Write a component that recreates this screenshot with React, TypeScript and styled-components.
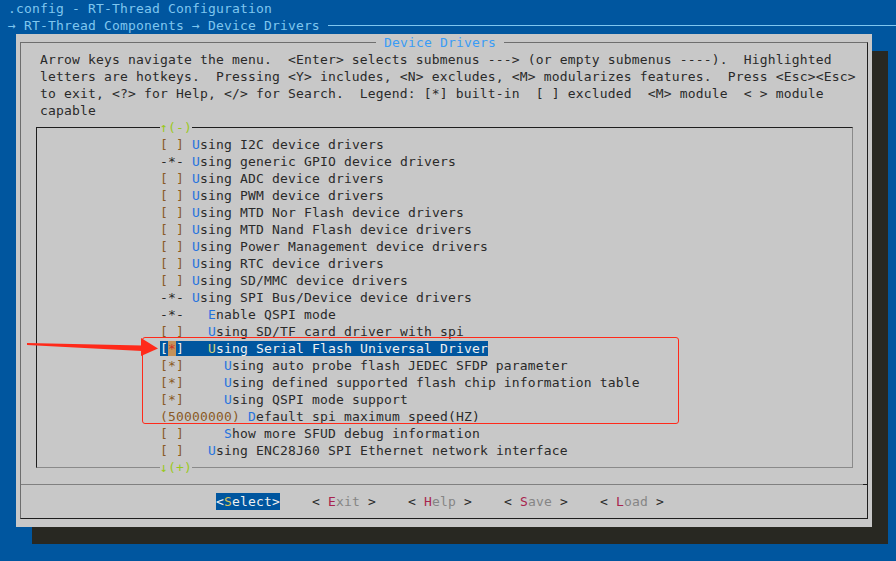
import React from 'react';
import styled, { createGlobalStyle } from 'styled-components';

const BLUE = '#00569f';
const GREY = '#c8c8c8';

const GlobalStyle = createGlobalStyle`
  html, body {
    margin: 0;
    padding: 0;
    background: ${BLUE};
  }
`;

const Screen = styled.div`
  position: relative;
  width: 896px;
  height: 561px;
  overflow: hidden;
  box-sizing: border-box;
  padding-left: 8px;
  background: ${BLUE};
  font-family: "DejaVu Sans Mono", "Liberation Mono", monospace;
  font-size: 13px;
  letter-spacing: 0.17px;
  line-height: 17px;
  white-space: pre;
`;

const TopLine = styled.div`
  height: 17px;
  color: #7fc6ef;
`;

const Crumb = styled.div`
  display: flex;
  align-items: center;
  height: 17px;
  color: #7fc6ef;

  &::after {
    content: '';
    flex: 1;
    height: 1px;
    margin-left: 8px;
    background: #7fc6ef;
  }
`;

const Dialog = styled.div`
  display: flex;
  flex-direction: column;
  box-sizing: border-box;
  width: 856px;
  height: 493px;
  margin-left: 8px;
  padding: 8px 4px;
  background: ${GREY};
  box-shadow: 16px 17px 0 #282822;
`;

const Frame = styled.div`
  position: relative;
  flex: 1;
  display: flex;
  flex-direction: column;
  border: 1px solid;
  border-color: #6e6e6e #1e1e1e #1e1e1e #6e6e6e;
`;

const DialogTitle = styled.span`
  position: absolute;
  top: -9px;
  left: 355px;
  background: ${GREY};
  color: #3a9cf5;
`;

const Help = styled.div`
  padding: 8px 0 0 19px;
  color: #2a2a2a;
`;

const Line = styled.div`
  height: 17px;
`;

const MenuBox = styled.div`
  position: relative;
  margin: 8px 14px 0 15px;
  padding: 8px 0 8px 123px;
  border: 1px solid;
  border-color: #1e1e1e #8a8a8a #8a8a8a #1e1e1e;
  color: #2a2a2a;
`;

const Scroll = styled.span<{ $bottom?: boolean }>`
  position: absolute;
  left: 123px;
  ${(p) => (p.$bottom ? 'bottom: -9px;' : 'top: -9px;')}
  background: ${GREY};
  color: #9ac81e;
`;

const Item = styled.span<{ $sel?: boolean }>`
  background: ${(p) => (p.$sel ? BLUE : 'transparent')};
  color: ${(p) => (p.$sel ? '#f0f0f0' : '#2a2a2a')};
`;

const Mark = styled.span<{ $kind: 'dep' | 'box'; $sel?: boolean }>`
  color: ${(p) => (p.$sel ? '#f0f0f0' : p.$kind === 'dep' ? '#2a2a2a' : '#8a5a26')};
`;

const Cursor = styled.span`
  background: #c4925a;
  color: #c8322a;
`;

const Hot = styled.span<{ $sel?: boolean }>`
  color: ${(p) => (p.$sel ? '#d6d27a' : '#2673de')};
`;

const Separator = styled.div`
  position: relative;
  height: 1px;
  margin-top: 16px;
  background: #808080;

  &::after {
    content: '';
    position: absolute;
    right: 0;
    top: 0;
    width: 4px;
    height: 1px;
    background: #1e1e1e;
  }
`;

const ButtonRow = styled.div`
  display: flex;
  gap: 32px;
  height: 17px;
  margin-top: 8px;
  padding-left: 195px;
`;

const Button = styled.span<{ $active?: boolean }>`
  background: ${(p) => (p.$active ? BLUE : 'transparent')};
  color: ${(p) => (p.$active ? '#f0f0f0' : '#2a2a2a')};
`;

const BtnLabel = styled.span<{ $active?: boolean }>`
  color: ${(p) => (p.$active ? '#f0f0f0' : '#858585')};
`;

const BtnKey = styled.span<{ $active?: boolean }>`
  color: ${(p) => (p.$active ? '#d6c25a' : '#a8244e')};
`;

const Callout = styled.div`
  position: absolute;
  left: 142px;
  top: 337px;
  width: 537px;
  height: 87px;
  box-sizing: border-box;
  border: 1.5px solid #ff2a1a;
  border-radius: 3px;
  pointer-events: none;
`;

const Pointer = styled.svg`
  position: absolute;
  left: 0;
  top: 330px;
`;

type Entry = {
  mark: string;
  kind: 'dep' | 'box';
  pad: string;
  hot: string;
  rest: string;
  sel?: boolean;
};

const entries: Entry[] = [
  { mark: '[ ]', kind: 'box', pad: ' ', hot: 'U', rest: 'sing I2C device drivers' },
  { mark: '-*-', kind: 'dep', pad: ' ', hot: 'U', rest: 'sing generic GPIO device drivers' },
  { mark: '[ ]', kind: 'box', pad: ' ', hot: 'U', rest: 'sing ADC device drivers' },
  { mark: '[ ]', kind: 'box', pad: ' ', hot: 'U', rest: 'sing PWM device drivers' },
  { mark: '[ ]', kind: 'box', pad: ' ', hot: 'U', rest: 'sing MTD Nor Flash device drivers' },
  { mark: '[ ]', kind: 'box', pad: ' ', hot: 'U', rest: 'sing MTD Nand Flash device drivers' },
  { mark: '[ ]', kind: 'box', pad: ' ', hot: 'U', rest: 'sing Power Management device drivers' },
  { mark: '[ ]', kind: 'box', pad: ' ', hot: 'U', rest: 'sing RTC device drivers' },
  { mark: '[ ]', kind: 'box', pad: ' ', hot: 'U', rest: 'sing SD/MMC device drivers' },
  { mark: '-*-', kind: 'dep', pad: ' ', hot: 'U', rest: 'sing SPI Bus/Device device drivers' },
  { mark: '-*-', kind: 'dep', pad: '   ', hot: 'E', rest: 'nable QSPI mode' },
  { mark: '[ ]', kind: 'box', pad: '   ', hot: 'U', rest: 'sing SD/TF card driver with spi' },
  { mark: '[*]', kind: 'box', pad: '   ', hot: 'U', rest: 'sing Serial Flash Universal Driver', sel: true },
  { mark: '[*]', kind: 'box', pad: '     ', hot: 'U', rest: 'sing auto probe flash JEDEC SFDP parameter' },
  { mark: '[*]', kind: 'box', pad: '     ', hot: 'U', rest: 'sing defined supported flash chip information table' },
  { mark: '[*]', kind: 'box', pad: '     ', hot: 'U', rest: 'sing QSPI mode support' },
  { mark: '(50000000)', kind: 'box', pad: ' ', hot: 'D', rest: 'efault spi maximum speed(HZ)' },
  { mark: '[ ]', kind: 'box', pad: '     ', hot: 'S', rest: 'how more SFUD debug information' },
  { mark: '[ ]', kind: 'box', pad: '   ', hot: 'U', rest: 'sing ENC28J60 SPI Ethernet network interface' },
];

const helpLines = [
  'Arrow keys navigate the menu.  <Enter> selects submenus ---> (or empty submenus ----).  Highlighted',
  'letters are hotkeys.  Pressing <Y> includes, <N> excludes, <M> modularizes features.  Press <Esc><Esc>',
  'to exit, <?> for Help, </> for Search.  Legend: [*] built-in  [ ] excluded  <M> module  < > module',
  'capable',
];

const buttons = [
  { key: 'S', label: 'elect', active: true },
  { key: 'E', label: 'xit' },
  { key: 'H', label: 'elp' },
  { key: 'S', label: 'ave' },
  { key: 'L', label: 'oad' },
];

function MenuMark({ e }: { e: Entry }) {
  if (e.sel) {
    return (
      <Mark $kind={e.kind} $sel>
        [<Cursor>*</Cursor>]
      </Mark>
    );
  }
  return <Mark $kind={e.kind}>{e.mark}</Mark>;
}

export default function App() {
  return (
    <>
      <GlobalStyle />
      <Screen>
        <TopLine>.config - RT-Thread Configuration</TopLine>
        <Crumb>→ RT-Thread Components → Device Drivers</Crumb>
        <Dialog>
          <Frame>
            <DialogTitle> Device Drivers </DialogTitle>
            <Help>
              {helpLines.map((l, i) => (
                <Line key={i}>{l}</Line>
              ))}
            </Help>
            <MenuBox>
              <Scroll>↑(-)</Scroll>
              {entries.map((e, i) => (
                <Line key={i}>
                  <Item $sel={e.sel}>
                    <MenuMark e={e} />
                    {e.pad}
                    <Hot $sel={e.sel}>{e.hot}</Hot>
                    {e.rest}
                  </Item>
                </Line>
              ))}
              <Scroll $bottom>↓(+)</Scroll>
            </MenuBox>
            <Separator />
            <ButtonRow>
              {buttons.map((b, i) =>
                b.active ? (
                  <Button key={i} $active>
                    {'<'}
                    <BtnKey $active>{b.key}</BtnKey>
                    <BtnLabel $active>{b.label}</BtnLabel>
                    {'>'}
                  </Button>
                ) : (
                  <Button key={i}>
                    {'< '}
                    <BtnKey>{b.key}</BtnKey>
                    <BtnLabel>{b.label}</BtnLabel>
                    {' >'}
                  </Button>
                ),
              )}
            </ButtonRow>
          </Frame>
        </Dialog>
        <Callout />
        <Pointer width="170" height="30" viewBox="0 0 170 30">
          <polygon points="27,13 142,15.5 142,21 27,15" fill="#ff2a1a" />
          <polygon points="141,8 158,18.5 141,26" fill="#ff2a1a" />
        </Pointer>
      </Screen>
    </>
  );
}
